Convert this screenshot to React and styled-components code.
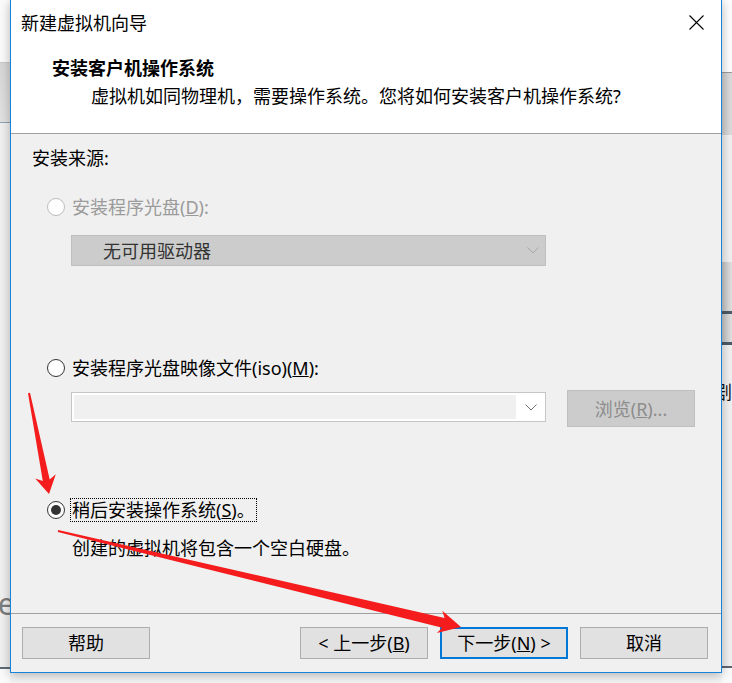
import React from 'react';
import styled, { createGlobalStyle } from 'styled-components';

const GlobalStyle = createGlobalStyle`
  html, body {
    margin: 0;
    padding: 0;
  }
  body {
    background: #f0f0f0;
    font-family: "Noto Sans", "Noto Sans CJK SC", sans-serif;
  }
`;

const Screen = styled.div`
  position: relative;
  display: flex;
  width: 732px;
  height: 683px;
  overflow: hidden;
  background: #f4f4f4;
`;

/* bits of the window lying behind the dialog */
const Strip = styled.div`
  display: flex;
  flex-direction: column;
  width: 10px;
  flex: none;
  overflow: hidden;
`;

const StripBlock = styled.div`
  flex: ${p => (p.$grow ? 1 : 'none')};
  height: ${p => (p.$h ? `${p.$h}px` : 'auto')};
  background: ${p => p.$bg || '#f0f0f0'};
  position: relative;
  overflow: hidden;
`;

const StripText = styled.span`
  position: absolute;
  top: ${p => p.$top}px;
  left: ${p => p.$left}px;
  font-size: ${p => p.$size}px;
  line-height: 1;
  color: ${p => p.$color};
  white-space: nowrap;
`;

const Dialog = styled.div`
  display: flex;
  flex-direction: column;
  width: 710px;
  height: 672px;
  flex: none;
  border: 1px solid #1883d7;
  border-top: none;
  background: #f0f0f0;
  box-shadow: 0 2px 10px rgba(0, 0, 0, 0.28);
  position: relative;
  z-index: 1;
`;

const TitleBar = styled.div`
  display: flex;
  align-items: center;
  justify-content: space-between;
  height: 44px;
  padding: 0 17px 0 10px;
  background: #fff;
  font-size: 18px;
  color: #000;
`;

const Header = styled.div`
  height: 77px;
  padding-top: 12px;
  background: #fff;
  border-bottom: 1px solid #a0a0a0;
`;

const HeaderTitle = styled.div`
  padding-left: 41px;
  font-size: 18px;
  line-height: 24px;
  font-weight: 700;
  color: #000;
`;

const HeaderSub = styled.div`
  margin-top: 4px;
  padding-left: 80px;
  font-size: 18px;
  line-height: 24px;
  color: #000;
`;

const Content = styled.div`
  display: flex;
  flex-direction: column;
  height: 479px;
  padding-left: 21px;
  font-size: 18px;
  color: #000;
`;

const SectionLabel = styled.div`
  margin-top: 12px;
  line-height: 24px;
`;

const RadioRow = styled.div`
  display: flex;
  align-items: center;
  gap: 5px;
  margin-top: ${p => p.$mt}px;
  margin-left: 15px;
  height: 24px;
`;

const RadioCircle = styled.span`
  display: flex;
  align-items: center;
  justify-content: center;
  box-sizing: border-box;
  width: 18px;
  height: 18px;
  border-radius: 50%;
  border: 1px solid ${p => (p.$disabled ? '#bcbcbc' : '#333')};
  background: #fff;

  &::after {
    content: '';
    display: ${p => (p.$checked ? 'block' : 'none')};
    width: 10px;
    height: 10px;
    border-radius: 50%;
    background: #333;
  }
`;

const RadioLabel = styled.span`
  padding: 0 1px;
  line-height: 22px;
  border: 1px dotted ${p => (p.$focused ? '#000' : 'transparent')};
  color: ${p => (p.$disabled ? '#9b9b9b' : '#000')};
  white-space: nowrap;
`;

const Select = styled.div`
  display: flex;
  align-items: center;
  box-sizing: border-box;
  width: 475px;
  height: 31px;
  margin-top: 16px;
  margin-left: 39px;
  padding-left: 31px;
  background: #cccccc;
  border: 1px solid #bfbfbf;
  color: #333;
`;

const SelectText = styled.span`
  flex: 1;
  line-height: 24px;
`;

const Chevron = styled.svg`
  width: 12px;
  height: 7px;
  flex: none;
  margin-right: ${p => p.$mr}px;
`;

const ComboRow = styled.div`
  display: flex;
  align-items: flex-start;
  gap: 21px;
  margin-top: 10px;
  margin-left: 39px;
  height: 37px;
`;

const Combo = styled.div`
  display: flex;
  align-items: center;
  box-sizing: border-box;
  width: 475px;
  height: 30px;
  margin-top: 2px;
  padding: 2px 0 2px 2px;
  background: #fff;
  border: 1px solid #c6c6c6;
`;

const ComboField = styled.div`
  align-self: stretch;
  flex: 1;
  background: #f0f0f0;
  margin-right: 9px;
`;

const BaseButton = styled.button`
  box-sizing: border-box;
  width: 128px;
  font: inherit;
  font-size: 18px;
  line-height: 24px;
  padding: 0;
  display: flex;
  align-items: center;
  justify-content: center;
`;

const BrowseButton = styled(BaseButton)`
  height: 37px;
  background: #cccccc;
  border: 1px solid #bfbfbf;
  color: #8c8c8c;
`;

const Description = styled.div`
  margin-top: 14px;
  margin-left: 40px;
  line-height: 24px;
`;

const Footer = styled.div`
  display: flex;
  align-items: center;
  gap: 12px;
  height: 58px;
  box-sizing: border-box;
  padding: 0 13px 0 11px;
  border-top: 1px solid #a0a0a0;
`;

const FooterButton = styled(BaseButton)`
  height: 32px;
  background: #e1e1e1;
  color: #000;
  border: ${p => (p.$primary ? '2px solid #0078d7' : '1px solid #adadad')};
  margin-left: ${p => (p.$push ? 'auto' : '0')};
  white-space: pre;
`;

const Overlay = styled.svg`
  position: absolute;
  left: 0;
  top: 0;
  width: 732px;
  height: 683px;
  pointer-events: none;
  z-index: 5;
`;

function arrowPoints(x1, y1, x2, y2, w0, w1, headLen, headW) {
  const len = Math.hypot(x2 - x1, y2 - y1);
  const ux = (x2 - x1) / len;
  const uy = (y2 - y1) / len;
  const px = -uy;
  const py = ux;
  const bx = x2 - ux * headLen;
  const by = y2 - uy * headLen;
  // shaft joins the head a little in front of the barbs
  const jx = bx + ux * 4;
  const jy = by + uy * 4;
  const pts = [
    [x1 + (px * w0) / 2, y1 + (py * w0) / 2],
    [jx + (px * w1) / 2, jy + (py * w1) / 2],
    [bx + (px * headW) / 2, by + (py * headW) / 2],
    [x2, y2],
    [bx - (px * headW) / 2, by - (py * headW) / 2],
    [jx - (px * w1) / 2, jy - (py * w1) / 2],
    [x1 - (px * w0) / 2, y1 - (py * w0) / 2],
  ];
  return pts.map(p => `${p[0].toFixed(1)},${p[1].toFixed(1)}`).join(' ');
}

const Radio = ({ checked, disabled, focused, children, mt }) => (
  <RadioRow $mt={mt}>
    <RadioCircle $checked={checked} $disabled={disabled} />
    <RadioLabel $disabled={disabled} $focused={focused}>{children}</RadioLabel>
  </RadioRow>
);

const ChevronIcon = ({ color, mr }) => (
  <Chevron viewBox="0 0 12 7" $mr={mr}>
    <polyline points="0.5,0.5 6,6 11.5,0.5" fill="none" stroke={color} strokeWidth="1" />
  </Chevron>
);

export default function App() {
  return (
    <>
      <GlobalStyle />
      <Screen>
        <Strip>
          <StripBlock $h={62} $bg="#fbfbfb" />
          <StripBlock $h={1} $bg="#c9c9c9" />
          <StripBlock $h={59} $bg="linear-gradient(#d6d6d6, #e2e2e2)" />
          <StripBlock $h={1} $bg="#8ea3b6" />
          <StripBlock $grow $bg="#f0f0f0">
            <StripText $top={466} $left={-14} $size={30} $color="#7d7d7d">re</StripText>
          </StripBlock>
          <StripBlock $h={2} $bg="#5d6b78" />
          <StripBlock $h={14} $bg="#fafafa" />
        </Strip>

        <Dialog>
          <TitleBar>
            <span>新建虚拟机向导</span>
            <svg width="15" height="15" viewBox="0 0 15 15">
              <path d="M0.5 0.5 L14.5 14.5 M14.5 0.5 L0.5 14.5" stroke="#000" strokeWidth="1.1" />
            </svg>
          </TitleBar>
          <Header>
            <HeaderTitle>安装客户机操作系统</HeaderTitle>
            <HeaderSub>虚拟机如同物理机，需要操作系统。您将如何安装客户机操作系统?</HeaderSub>
          </Header>

          <Content>
            <SectionLabel>安装来源:</SectionLabel>

            <Radio mt={25} disabled>
              安装程序光盘(<u>D</u>):
            </Radio>
            <Select>
              <SelectText>无可用驱动器</SelectText>
              <ChevronIcon color="#a8a8a8" mr={6} />
            </Select>

            <Radio mt={90}>
              安装程序光盘映像文件(iso)(<u>M</u>):
            </Radio>
            <ComboRow>
              <Combo>
                <ComboField />
                <ChevronIcon color="#707070" mr={8} />
              </Combo>
              <BrowseButton disabled>
                浏览(<u>R</u>)...
              </BrowseButton>
            </ComboRow>

            <Radio mt={71} checked focused>
              稍后安装操作系统(<u>S</u>)。
            </Radio>
            <Description>创建的虚拟机将包含一个空白硬盘。</Description>
          </Content>

          <Footer>
            <FooterButton>帮助</FooterButton>
            <FooterButton $push>
              {'< 上一步('}<u>B</u>{')'}
            </FooterButton>
            <FooterButton $primary>
              {'下一步('}<u>N</u>{') >'}
            </FooterButton>
            <FooterButton>取消</FooterButton>
          </Footer>
        </Dialog>

        <Strip>
          <StripBlock $h={72} $bg="#fdfdfd" />
          <StripBlock $h={1} $bg="#9a9a9a" />
          <StripBlock $h={62} $bg="linear-gradient(90deg, #cfcfcf, #dcdcdc)" />
          <StripBlock $h={127} $bg="#f0f0f0" />
          <StripBlock $h={49} $bg="linear-gradient(90deg, #c4c4c4, #e0e0e0)" />
          <StripBlock $h={3} $bg="#4d5b68" />
          <StripBlock $h={28} $bg="linear-gradient(90deg, #c4c4c4, #e0e0e0)" />
          <StripBlock $h={3} $bg="#4d5b68" />
          <StripBlock $grow $bg="#f0f0f0">
            <StripText $top={38} $left={-8} $size={18} $color="#111">剧</StripText>
          </StripBlock>
          <StripBlock $h={2} $bg="#5d6570" />
          <StripBlock $h={15} $bg="#fafafa" />
        </Strip>

        <Overlay viewBox="0 0 732 683">
          <polygon points={arrowPoints(29, 393, 49, 494, 2, 7, 18, 21)} fill="#f41c1c" />
          <polygon points={arrowPoints(58, 531, 461, 627, 2, 10, 22, 23)} fill="#f41c1c" />
        </Overlay>
      </Screen>
    </>
  );
}
